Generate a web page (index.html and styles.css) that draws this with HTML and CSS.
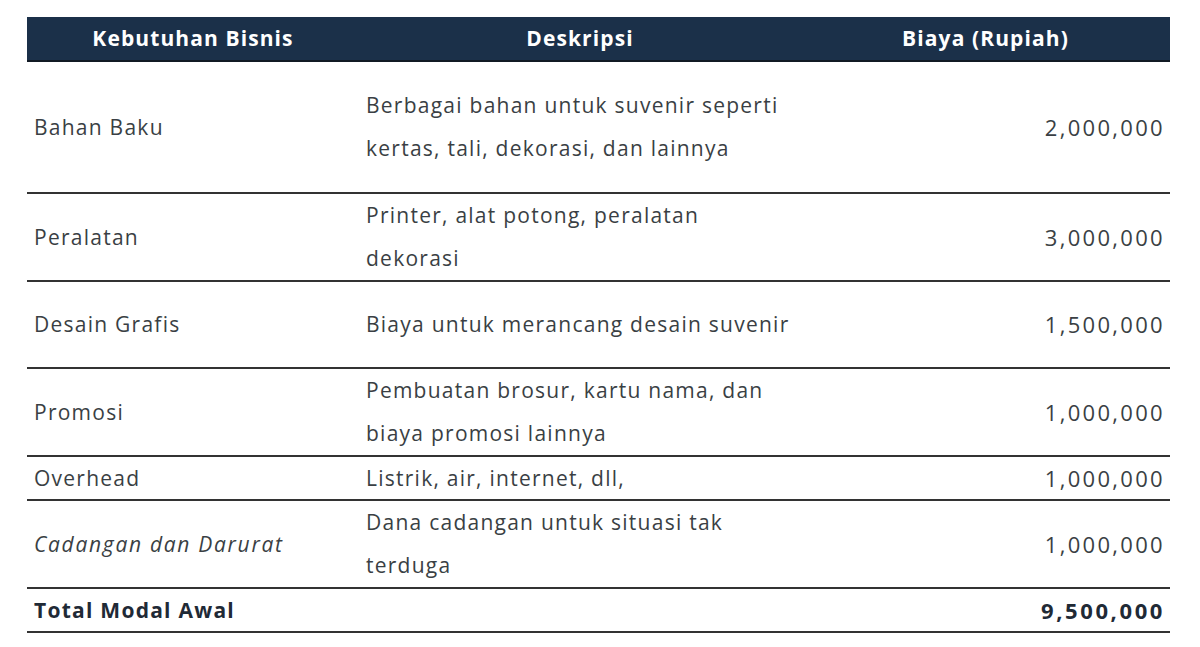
FILE: index.html
```html
<!DOCTYPE html>
<html lang="id">
<head>
<meta charset="utf-8">
<title>Modal Awal</title>
<link rel="stylesheet" href="styles.css">
</head>
<body>
<table class="biaya">
  <colgroup>
    <col class="c1"><col class="c2"><col class="c3">
  </colgroup>
  <thead>
    <tr class="head">
      <th>Kebutuhan Bisnis</th>
      <th>Deskripsi</th>
      <th>Biaya (Rupiah)</th>
    </tr>
  </thead>
  <tbody>
    <tr class="r1">
      <td>Bahan Baku</td>
      <td>Berbagai bahan untuk suvenir seperti kertas, tali, dekorasi, dan lainnya</td>
      <td class="num">2,000,000</td>
    </tr>
    <tr class="r2">
      <td>Peralatan</td>
      <td>Printer, alat potong, peralatan dekorasi</td>
      <td class="num">3,000,000</td>
    </tr>
    <tr class="r3">
      <td>Desain Grafis</td>
      <td>Biaya untuk merancang desain suvenir</td>
      <td class="num">1,500,000</td>
    </tr>
    <tr class="r4">
      <td>Promosi</td>
      <td>Pembuatan brosur, kartu nama, dan biaya promosi lainnya</td>
      <td class="num">1,000,000</td>
    </tr>
    <tr class="r5 single">
      <td>Overhead</td>
      <td>Listrik, air, internet, dll,</td>
      <td class="num">1,000,000</td>
    </tr>
    <tr class="r6">
      <td class="it">Cadangan dan Darurat</td>
      <td>Dana cadangan untuk situasi tak terduga</td>
      <td class="num">1,000,000</td>
    </tr>
    <tr class="r7 single total">
      <td>Total Modal Awal</td>
      <td></td>
      <td class="num">9,500,000</td>
    </tr>
  </tbody>
</table>
</body>
</html>
```

FILE: styles.css
```css
html, body {
  margin: 0;
  padding: 0;
  background: #ffffff;
}
body {
  padding: 17px 0 0 27px;
  font-family: "Open Sans", "Noto Sans", sans-serif;
  color: #3a3f44;
}
.biaya {
  width: 1143px;
  border-collapse: collapse;
  table-layout: fixed;
  font-size: 21px;
  letter-spacing: 1.25px;
}
.c1 { width: 332px; }
.c2 { width: 442px; }
.c3 { width: 369px; }

.head th {
  background: #1b3049;
  color: #ffffff;
  font-weight: 700;
  height: 43px;
  padding: 0;
  text-align: center;
  border-bottom: 2px solid #111a24;
  line-height: 43px;
  letter-spacing: 1.1px;
}
.biaya td {
  padding: 0 7px;
  line-height: 43px;
  vertical-align: middle;
  border-bottom: 2px solid #333333;
}
.biaya td:nth-child(2) { padding-left: 7px; padding-right: 3px; }
.biaya td.num {
  text-align: right;
  font-size: 22px;
  letter-spacing: 2.3px;
  padding-right: 5px;
}
.it { font-style: italic; letter-spacing: 1.7px; }
.total td { font-weight: 700; color: #1f2a36; }
.biaya .total td.num { letter-spacing: 2.6px; }
.single td { line-height: 42px; }

.r1 { height: 132px; }
.r2 { height: 88px; }
.r3 { height: 87px; }
.r4 { height: 87px; }
.r5 { height: 44px; }
.r6 { height: 88px; }
.r7 { height: 44px; }
```
